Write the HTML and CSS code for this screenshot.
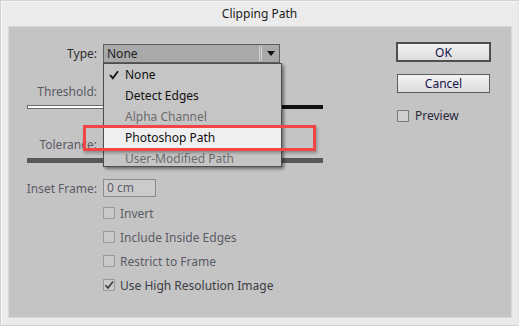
FILE: index.html
```html
<!DOCTYPE html>
<html lang="en">
<head>
<meta charset="UTF-8" />
<title>Clipping Path</title>
<link rel="stylesheet" href="styles.css">
</head>
<body>
<div class="window">
  <div class="title">Clipping Path</div>

  <div class="panel">
    <div class="form">
      <div class="row type-row">
        <span class="label">Type:</span>
        <div class="select">
          <span class="select-value">None</span>
          <span class="select-split"></span>
          <span class="select-arrow"></span>
        </div>
      </div>

      <div class="row slot-label"><span class="label dim">Threshold:</span></div>
      <div class="slider threshold"><span class="slider-fill"></span></div>

      <div class="row slot-label tol"><span class="label dim">Tolerance:</span></div>
      <div class="slider tolerance"></div>

      <div class="row inset-row">
        <span class="label dim">Inset Frame:</span>
        <div class="field">0 cm</div>
      </div>

      <ul class="checks">
        <li><span class="box"></span>Invert</li>
        <li><span class="box"></span>Include Inside Edges</li>
        <li><span class="box"></span>Restrict to Frame</li>
        <li class="on">
          <span class="box">
            <svg width="12" height="12" viewBox="0 0 12 12"><path d="M2.5 6.2 L5 9 L10 2.5" fill="none" stroke="#3a3a3a" stroke-width="1.6"/></svg>
          </span>Use High Resolution Image
        </li>
      </ul>

      <!-- open dropdown of the Type select -->
      <div class="menu">
        <div class="item">
          <svg class="tick" width="10" height="10" viewBox="0 0 10 10"><path d="M1 5 L3.8 8.2 L9 1.2" fill="none" stroke="#111" stroke-width="1.8"/></svg>
          None
        </div>
        <div class="item">Detect Edges</div>
        <div class="item off">Alpha Channel</div>
        <div class="item hot">Photoshop Path</div>
        <div class="item off">User-Modified Path</div>
      </div>
      <div class="callout"></div>
    </div>

    <div class="actions">
      <button class="btn primary">OK</button>
      <button class="btn">Cancel</button>
      <label class="preview"><span class="box"></span>Preview</label>
    </div>
  </div>
</div>
</body>
</html>
```

FILE: styles.css
```css
html, body {
  margin: 0; padding: 0;
  width: 519px; height: 326px;
  overflow: hidden;
  background: #ebebeb;
  font-family: 'Noto Sans', 'Open Sans', sans-serif;
  font-size: 12px;
  color: #2a2a2a;
}
.window {
  box-sizing: border-box;
  width: 519px; height: 326px;
  border: 1px solid #d2d2d2;
  border-right-color: #e6e6e6;
  box-shadow: inset 1px 1px 0 #f6f6f6;
}
.title {
  height: 25px;
  line-height: 26px;
  text-align: center;
  color: #1c1c1c;
}
.panel {
  box-sizing: border-box;
  margin: 0 6px 0 7px;
  height: 292px;
  background: #c4c4c4;
  border: 1px solid #d8d8d8;
  display: flex;
}
.form {
  position: relative;
  width: 387px;
}
.row {
  display: flex;
  align-items: center;
  gap: 6px;
}
.label {
  width: 88px;
  text-align: right;
  flex: none;
  color: #2e2e2e;
}
.label.dim { color: #5b5b66; }

.type-row { margin-top: 17px; height: 19px; }
.select {
  box-sizing: border-box;
  width: 177px; height: 19px;
  background: #a9a9a9;
  border: 1px solid #5e5e5e;
  display: flex;
  align-items: center;
}
.select-value { flex: 1; padding-left: 3px; color: #1e1e1e; }
.select-split {
  width: 1px; height: 15px;
  border-left: 1px solid #d4d4d4;
  border-right: 1px solid #d4d4d4;
  margin-right: 5px;
}
.select-arrow {
  width: 0; height: 0;
  border-left: 4px solid transparent;
  border-right: 4px solid transparent;
  border-top: 5px solid #111;
  margin-right: 4px;
}

.slot-label { margin-top: 20px; height: 16px; }
.slot-label.tol { margin-top: 27px; }
.slider {
  box-sizing: border-box;
  margin: 6px 0 0 18px;
  width: 296px; height: 4px;
}
.threshold {
  background: #111;
  display: flex;
}
.slider-fill {
  width: 180px;
  background: #fff;
  border: 1px solid #6a6a6a;
  box-sizing: border-box;
}
.tolerance { background: #585858; height: 5px; }

.inset-row { margin-top: 16px; height: 18px; }
.field {
  box-sizing: border-box;
  width: 53px; height: 18px;
  border: 1px solid #8c8c8c;
  background: #cbcbcb;
  color: #5b5b66;
  padding-left: 3px;
  line-height: 16px;
}

.checks {
  list-style: none;
  margin: 4px 0 0 94px;
  padding: 0;
}
.checks li {
  height: 24px;
  display: flex;
  align-items: center;
  gap: 5px;
  color: #5b5b66;
}
.checks li.on { color: #3c3c44; }
.box {
  box-sizing: border-box;
  width: 12px; height: 12px;
  border: 1px solid #9a9a9a;
  background: #c9c9c9;
  display: inline-flex;
  align-items: center;
  justify-content: center;
  flex: none;
}
.box svg { margin: -1px; }

.menu {
  position: absolute;
  left: 94px; top: 36px;
  box-sizing: border-box;
  width: 179px; height: 104px;
  background: #c5c5c5;
  border: 1px solid #4e4e4e;
  box-shadow: 2px 2px 3px rgba(0, 0, 0, 0.45);
  overflow: hidden;
}
.item {
  position: relative;
  height: 21px;
  line-height: 22px;
  padding-left: 21px;
  color: #111;
}
.item.off { color: #6c6c6c; }
.item.hot { background: #efefef; }
.tick { position: absolute; left: 5px; top: 6px; }

.callout {
  position: absolute;
  left: 74px; top: 98px;
  width: 227px; height: 20px;
  border: 3px solid #f24646;
  box-shadow: 1px 2px 3px rgba(0, 0, 0, 0.3);
}

.actions {
  display: flex;
  flex-direction: column;
  align-items: flex-start;
}
.btn {
  box-sizing: border-box;
  font: inherit;
  color: #14144a;
  background: linear-gradient(#f3f3f3, #dcdcdc);
  border: 1px solid #5c5c5c;
  padding: 0;
  width: 93px; height: 19px;
  margin: 12px 0 0 1px;
}
.btn.primary {
  border: 2px solid #4f4f4f;
  width: 95px; height: 20px;
  margin: 15px 0 0 0;
}
.preview {
  margin: 14px 0 0 1px;
  display: flex;
  align-items: center;
  gap: 6px;
  color: #2a2a3a;
}
.preview .box { background: #cfcfcf; border-color: #7a7a7a; }
```
